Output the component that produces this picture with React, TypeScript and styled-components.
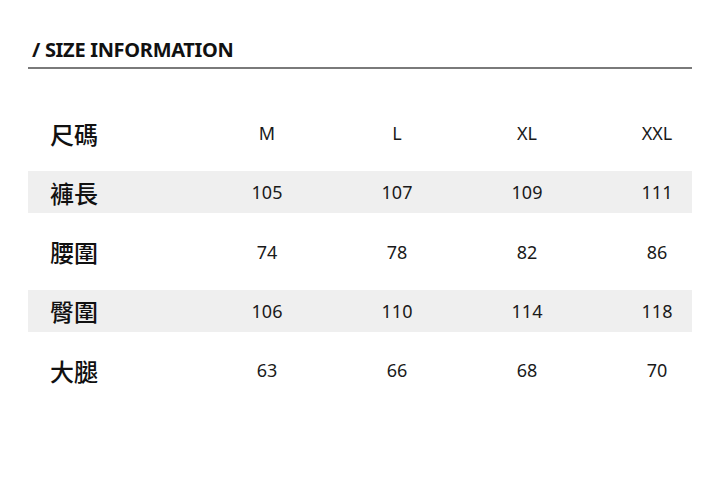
import React from "react";
import styled, { createGlobalStyle } from "styled-components";

const sizes = ["M", "L", "XL", "XXL"];

const rows = [
  { label: "褲長", values: ["105", "107", "109", "111"] },
  { label: "腰圍", values: ["74", "78", "82", "86"] },
  { label: "臀圍", values: ["106", "110", "114", "118"] },
  { label: "大腿", values: ["63", "66", "68", "70"] },
];

const App = () => {
  return (
    <>
      <GlobalStyle />
      <Page>
        <Title>/ SIZE INFORMATION</Title>
        <Table>
          <Row>
            <Label>尺碼</Label>
            {sizes.map((s) => (
              <Cell key={s}>{s}</Cell>
            ))}
          </Row>
          {rows.map((row, i) => (
            <Row key={row.label} shaded={i % 2 === 0}>
              <Label>{row.label}</Label>
              {row.values.map((v, j) => (
                <Cell key={j}>{v}</Cell>
              ))}
            </Row>
          ))}
        </Table>
      </Page>
    </>
  );
};
export default App;

const GlobalStyle = createGlobalStyle`
  html, body {
    margin: 0;
    padding: 0;
    background: #ffffff;
  }
`;

const Page = styled.div`
  width: 720px;
  height: 482px;
  padding: 36px 28px 0;
  box-sizing: border-box;
  font-family: "Noto Sans", "Noto Sans CJK TC", sans-serif;
  color: #161616;
`;

const Title = styled.div`
  padding: 0 0 3px 4px;
  border-bottom: 2px solid #7a7a7a;
  font-size: 20px;
  font-weight: 700;
  line-height: 28px;
  letter-spacing: -0.3px;
  color: #111;
`;

const Table = styled.div`
  display: flex;
  flex-direction: column;
  gap: 17.25px;
  margin-top: 43px;
`;

const Row = styled.div<{ shaded?: boolean }>`
  display: grid;
  grid-template-columns: 174px repeat(4, 130px);
  align-items: center;
  width: 664px;
  height: 42px;
  background: ${({ shaded }) => (shaded ? "#efefef" : "transparent")};
`;

const Label = styled.div`
  padding-left: 22px;
  font-family: "Noto Sans CJK TC", sans-serif;
  font-size: 24px;
  font-weight: 500;
  color: #111;
`;

const Cell = styled.div`
  text-align: center;
  font-size: 18px;
  color: #1a1a1a;
`;
